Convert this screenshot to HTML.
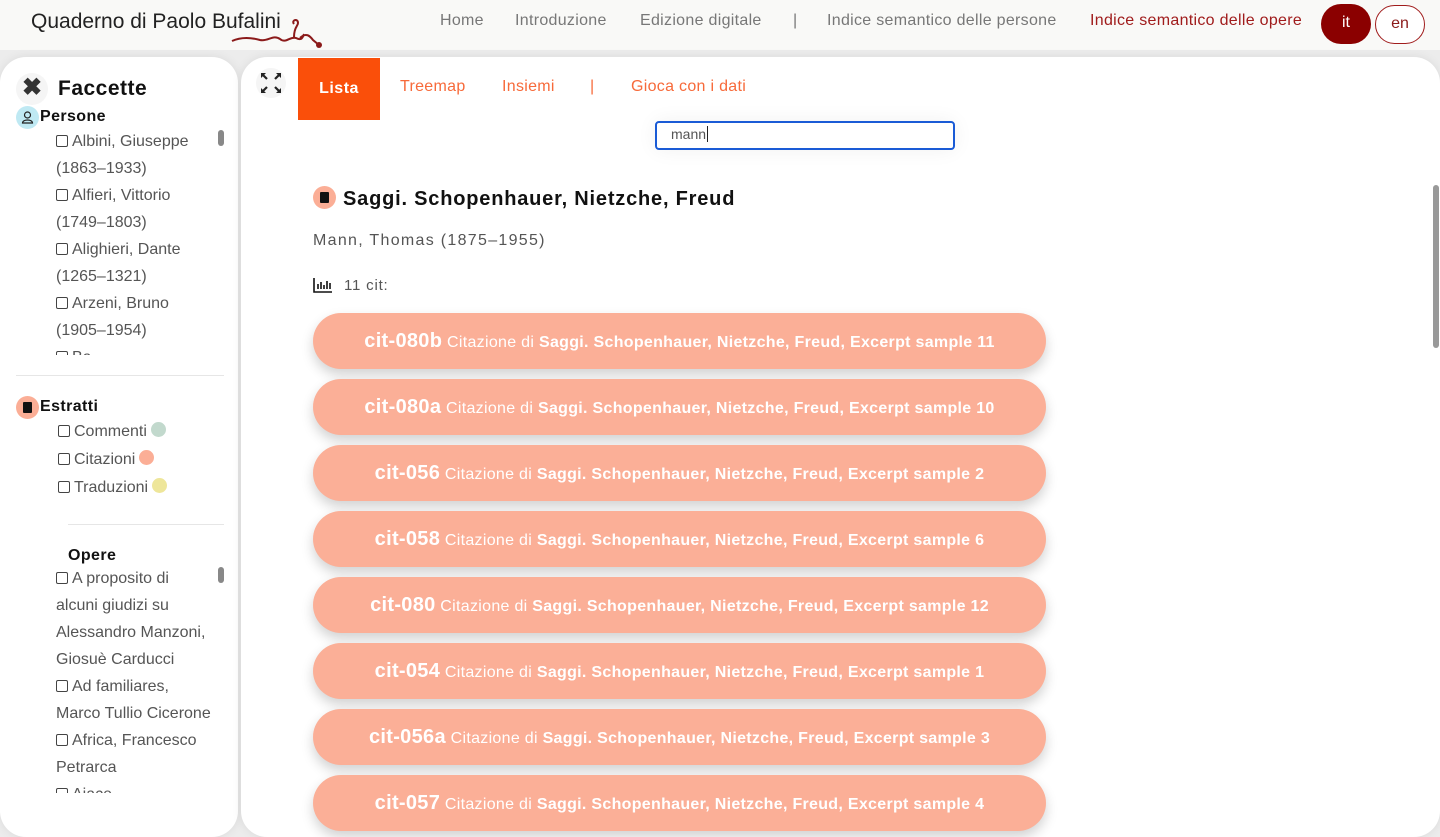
<!DOCTYPE html>
<html><head><meta charset="utf-8"><style>
*{box-sizing:border-box;margin:0;padding:0}
body{width:1440px;height:820px;overflow:hidden;background:#ececec;font-family:"Liberation Sans",sans-serif;position:relative}
.hdr{position:absolute;left:0;top:0;width:1440px;height:50px;background:#f9f9f7}
.logo{position:absolute;left:31px;top:10px;font-size:21px;color:#222;letter-spacing:0}
.nav{position:absolute;top:12px;font-size:16px;color:#777;letter-spacing:.3px}
.side{position:absolute;left:0;top:57px;width:238px;height:780px;background:#fff;border-radius:26px;box-shadow:0 0 10px rgba(0,0,0,.08)}
.main{position:absolute;left:241px;top:57px;width:1199px;height:780px;background:#fff;border-radius:26px;box-shadow:0 0 10px rgba(0,0,0,.08)}
.it{position:absolute;font-size:16px;color:#555;line-height:27px;overflow:hidden}
.cb{display:inline-block;width:12px;height:12px;border:1px solid #444;border-radius:2px;margin-right:4px;vertical-align:-1px}
.dot{display:inline-block;width:15px;height:15px;border-radius:50%;margin-left:4px;vertical-align:-1px}
.pill{position:absolute;left:313px;width:733px;height:56px;border-radius:28px;background:#fbaf97;color:#fff;font-size:16px;text-align:center;line-height:56px;box-shadow:0 6px 12px rgba(0,0,0,.18);letter-spacing:.3px}
.pill b{font-size:20px}
.pill span{font-weight:bold}
.sb{position:absolute;width:6px;border-radius:3px;background:#888}
</style></head><body>
<div class="hdr">
<div class="logo">Quaderno di Paolo Bufalini</div>
<svg style="position:absolute;left:228px;top:14px" width="100" height="36"><path d="M4 27 C15 22 25 24 32 26 C40 28 45 20 52 25 C58 30 62 22 68 24 C72 26 74 26 76 20 M66 10 c-3 -4 4 -6 4 -1 c0 3 -4 4 -4 14 M72 24 C78 18 82 22 85 26 L91 31" stroke="#8b1a1a" stroke-width="2" fill="none"/><circle cx="91" cy="31" r="3" fill="#8b1a1a"/></svg>
<div class="nav" style="left:440px">Home</div>
<div class="nav" style="left:515px">Introduzione</div>
<div class="nav" style="left:640px">Edizione digitale</div>
<div class="nav" style="left:793px">|</div>
<div class="nav" style="left:827px">Indice semantico delle persone</div>
<div class="nav" style="left:1090px;color:#a01c1c">Indice semantico delle opere</div>
<div style="position:absolute;left:1321px;top:4px;width:50px;height:40px;border-radius:20px;background:#8b0000;color:#fff;text-align:center;line-height:38px;font-size:16px">it</div>
<div style="position:absolute;left:1375px;top:5px;width:50px;height:39px;border-radius:20px;border:1px solid #a01c1c;color:#8b1a1a;text-align:center;line-height:36px;font-size:16px;background:#fff">en</div>
</div>

<div class="side">
<div style="position:absolute;left:16px;top:16px;width:32px;height:32px;border-radius:50%;background:#f5f5f5;text-align:center;line-height:30px;font-size:24px;font-weight:bold;color:#333">✖</div>
<div style="position:absolute;left:58px;top:20px;font-size:21px;font-weight:bold;color:#111;letter-spacing:.5px">Faccette</div>
<div style="position:absolute;left:16px;top:49px;width:23px;height:23px;border-radius:50%;background:#bfe9f3"><svg width="23" height="23"><circle cx="11.5" cy="9" r="3" stroke="#222" fill="none" stroke-width="1.2"/><path d="M6.5 17 c0-4 10-4 10 0z" stroke="#222" fill="none" stroke-width="1.2"/></svg></div>
<div style="position:absolute;left:40px;top:51px;font-size:16px;font-weight:bold;color:#111;letter-spacing:.4px">Persone</div>
<div class="it" style="left:56px;top:71px;width:150px;height:227px"><span class="cb"></span>Albini, Giuseppe (1863–1933)<br><span class="cb"></span>Alfieri, Vittorio (1749–1803)<br><span class="cb"></span>Alighieri, Dante (1265–1321)<br><span class="cb"></span>Arzeni, Bruno (1905–1954)<br><span class="cb"></span>Ba</div>
<div class="sb" style="left:218px;top:73px;height:16px"></div>
<div style="position:absolute;left:16px;top:318px;width:208px;height:1px;background:#e6e6e6"></div>
<div style="position:absolute;left:16px;top:339px;width:23px;height:23px;border-radius:50%;background:#fbae96"><div style="position:absolute;left:7px;top:6px;width:9px;height:11px;background:#111;border-radius:1px"></div></div>
<div style="position:absolute;left:40px;top:341px;font-size:16px;font-weight:bold;color:#111;letter-spacing:.4px">Estratti</div>
<div class="it" style="left:58px;top:361px;line-height:28px"><span class="cb"></span>Commenti<span class="dot" style="background:#c2d9cd"></span><br><span class="cb"></span>Citazioni<span class="dot" style="background:#fbae96"></span><br><span class="cb"></span>Traduzioni<span class="dot" style="background:#eee69a"></span></div>
<div style="position:absolute;left:68px;top:467px;width:156px;height:1px;background:#e6e6e6"></div>
<div style="position:absolute;left:68px;top:490px;font-size:16px;font-weight:bold;color:#111;letter-spacing:.4px">Opere</div>
<div class="it" style="left:56px;top:508px;width:158px;height:228px"><span class="cb"></span>A proposito di alcuni giudizi su Alessandro Manzoni, Giosuè Carducci<br><span class="cb"></span>Ad familiares, Marco Tullio&nbsp;Cicerone<br><span class="cb"></span>Africa, Francesco Petrarca<br><span class="cb"></span>Ajace</div>
<div class="sb" style="left:218px;top:510px;height:16px"></div>
</div>

<div class="main">
<div style="position:absolute;left:15px;top:11px;width:30px;height:30px;border-radius:50%;background:#f5f5f5"><svg width="30" height="30"><g stroke="#222" stroke-width="2.2" fill="#222"><path d="M6 6l5 5M24 6l-5 5M6 24l5-5M24 24l-5-5"/></g><g fill="#222"><path d="M5 5h5l-5 5zM25 5h-5l5 5zM5 25h5l-5-5zM25 25h-5l5-5z"/></g></svg></div>
<div style="position:absolute;left:57px;top:1px;width:82px;height:62px;background:#fa4f0a;color:#fff;font-weight:bold;font-size:16px;text-align:center;line-height:62px;letter-spacing:.5px">Lista</div>
<div style="position:absolute;left:159px;top:21px;font-size:16px;color:#f76a3a;letter-spacing:.3px">Treemap</div>
<div style="position:absolute;left:261px;top:21px;font-size:16px;color:#f76a3a;letter-spacing:.3px">Insiemi</div>
<div style="position:absolute;left:349px;top:21px;font-size:16px;color:#f76a3a">|</div>
<div style="position:absolute;left:390px;top:21px;font-size:16px;color:#f76a3a;letter-spacing:.3px">Gioca con i dati</div>
<div style="position:absolute;left:414px;top:64px;width:300px;height:29px;border:2px solid #1a5bd6;border-radius:4px;font-size:14px;color:#555;padding:3px 0 0 14px;box-shadow:0 0 20px rgba(0,0,0,.06)">mann<span style="border-left:1px solid #222;margin-left:1px"></span></div>
<div style="position:absolute;left:72px;top:129px;width:23px;height:23px;border-radius:50%;background:#fbae96"><div style="position:absolute;left:7px;top:6px;width:9px;height:11px;background:#111;border-radius:1px"></div></div>
<div style="position:absolute;left:102px;top:131px;font-size:20px;font-weight:bold;color:#111;letter-spacing:.8px">Saggi. Schopenhauer, Nietzche, Freud</div>
<div style="position:absolute;left:72px;top:175px;font-size:16px;color:#555;letter-spacing:1.3px">Mann, Thomas (1875–1955)</div>
<svg style="position:absolute;left:72px;top:220px" width="20" height="16"><path d="M1 1v14h18" stroke="#111" stroke-width="1.6" fill="none"/><path d="M5 12V7M8 12V5M11 12V8M14 12V4M17 12V6" stroke="#111" stroke-width="1.6"/></svg>
<div style="position:absolute;left:103px;top:220px;font-size:15px;color:#555;letter-spacing:.8px">11 cit:</div>
<div class="sb" style="left:1192px;top:128px;height:163px;background:#999"></div>
</div>

<div class="pill" style="top:313px"><b>cit-080b</b> Citazione di <span>Saggi. Schopenhauer, Nietzche, Freud, Excerpt sample 11</span></div>
<div class="pill" style="top:379px"><b>cit-080a</b> Citazione di <span>Saggi. Schopenhauer, Nietzche, Freud, Excerpt sample 10</span></div>
<div class="pill" style="top:445px"><b>cit-056</b> Citazione di <span>Saggi. Schopenhauer, Nietzche, Freud, Excerpt sample 2</span></div>
<div class="pill" style="top:511px"><b>cit-058</b> Citazione di <span>Saggi. Schopenhauer, Nietzche, Freud, Excerpt sample 6</span></div>
<div class="pill" style="top:577px"><b>cit-080</b> Citazione di <span>Saggi. Schopenhauer, Nietzche, Freud, Excerpt sample 12</span></div>
<div class="pill" style="top:643px"><b>cit-054</b> Citazione di <span>Saggi. Schopenhauer, Nietzche, Freud, Excerpt sample 1</span></div>
<div class="pill" style="top:709px"><b>cit-056a</b> Citazione di <span>Saggi. Schopenhauer, Nietzche, Freud, Excerpt sample 3</span></div>
<div class="pill" style="top:775px"><b>cit-057</b> Citazione di <span>Saggi. Schopenhauer, Nietzche, Freud, Excerpt sample 4</span></div>
</body></html>
